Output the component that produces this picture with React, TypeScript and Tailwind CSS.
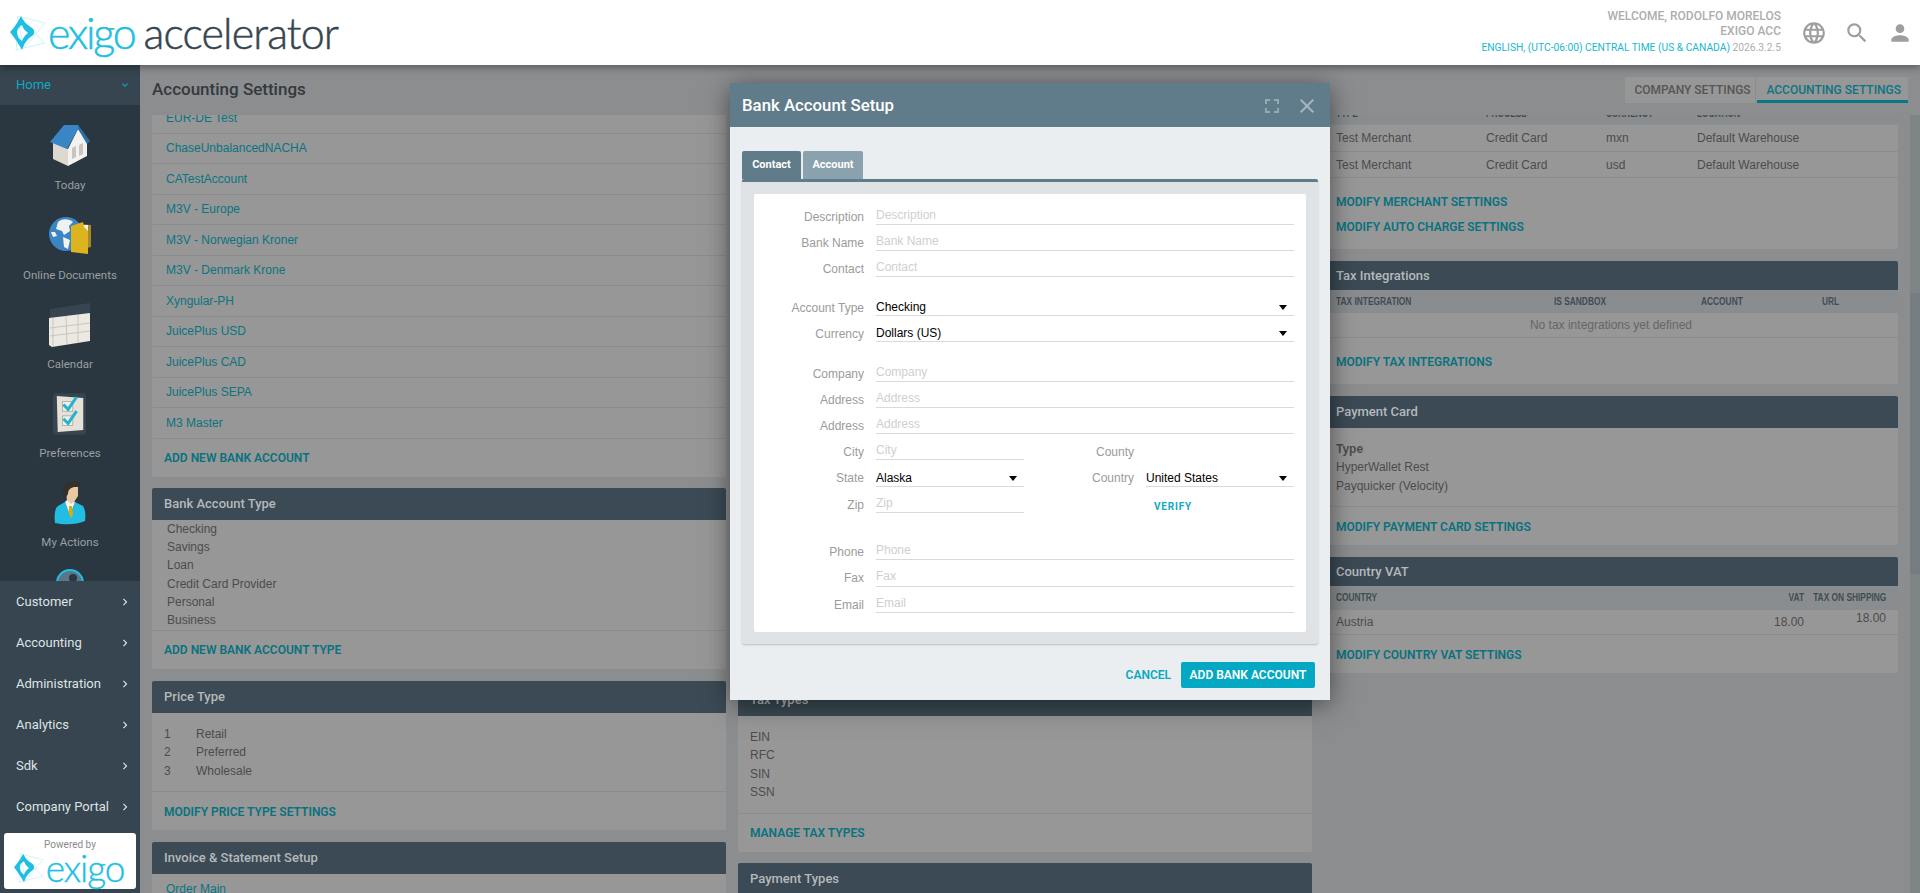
import { MdLanguage, MdSearch, MdPerson, MdClose, MdFullscreen, MdChevronRight, MdExpandMore } from "react-icons/md";

const roboto = "font-['Roboto',sans-serif]";

function Star({ className }: { className: string }) {
  return (
    <svg viewBox="0 0 36 36" className={className}>
      <g fill="none" stroke="#a0e3f3" strokeWidth="0.5">
        <path d="M7 1 L35 8 L14 33 Z" />
        <path d="M9 4 L35 28 L6 35 Z" />
      </g>
      <path
        fill="#1fbfe2"
        fillRule="evenodd"
        d="M0 17 C4 13 8 7 11 1 C13 6 17 10 22 13 C25 15 25 19 22 21 C17 24 14 29 12 35 C8 28 4 22 0 17 Z M12 10 C9 12 7 14 7 17 C7 21 9 24 12 26 C13 23 15 20 18 18 C15 16 13 13 12 10 Z"
      />
    </svg>
  );
}

function House() {
  return (
    <svg viewBox="0 0 42 44" className="w-[42px] h-[44px]">
      <path fill="#dcd9d0" d="M4 18 L19 25 L19 42 L4 35 Z" />
      <path fill="#f3f2f0" d="M19 25 L19 42 L38 32 L38 16 L29 5 Z" />
      <path fill="#c9c5ba" d="M23 24 L27 22 L27 33 L23 35 Z M30 21 L34 19 L34 30 L30 32 Z" />
      <path fill="#3a85c6" d="M1 18 L15 1 L29 1 L40 17 L29 5 L18 25 Z" />
      <path fill="#2b6fa8" d="M29 1 L41 17 L38 20 L29 5 Z" />
    </svg>
  );
}

function GlobeFolder() {
  return (
    <svg viewBox="0 0 42 38" className="w-[42px] h-[38px]">
      <circle cx="17" cy="17" r="17" fill="#3c85c5" />
      <path fill="#f0f2f2" d="M9 5 C14 1 20 2 24 5 L20 9 L21 14 L15 18 L13 14 L7 12 Z M14 20 L21 23 L19 32 L15 30 Z M2 15 L6 15 L8 19 L4 20 Z" />
      <path fill="#a8892a" d="M30 7 L42 8 L42 30 L34 32 Z" />
      <path fill="#f2efe4" d="M34 8 L39 8 L39 31 L34 33 Z" />
      <path fill="#dcb41e" d="M22 9 L34 5 L35 10 L39 14 L39 37 L22 35 Z" />
    </svg>
  );
}

function CalendarIcon() {
  return (
    <svg viewBox="0 0 42 44" className="w-[42px] h-[44px]">
      <path fill="#36454f" d="M1 6 L41 0 L41 11 L1 16 Z" />
      <path fill="#ece9e2" d="M0 15 L41 10 L41 38 L3 44 L0 42 Z" />
      <g stroke="#c9c6bc" strokeWidth="1" fill="none">
        <path d="M4 15 L4 43 M17 13 L18 41 M29 12 L29 39" />
        <path d="M1 25 L41 20 M1 33 L41 28" />
      </g>
    </svg>
  );
}

function Pref() {
  return (
    <svg viewBox="0 0 36 44" className="w-[34px] h-[44px]">
      <rect x="0" y="0" width="35" height="44" rx="4" fill="#36454f" />
      <path fill="#e6e1d6" d="M4 3 L32 5 L32 39 L5 41 Z" />
      <rect x="10" y="9" width="11" height="10" fill="#f2efe8" stroke="#8d8d86" strokeWidth="0.6" />
      <rect x="10" y="24" width="11" height="10" fill="#f2efe8" stroke="#8d8d86" strokeWidth="0.6" />
      <path fill="none" stroke="#23b3cf" strokeWidth="3.2" d="M11 12 L16 17 L25 4 M11 27 L16 32 L25 19" />
    </svg>
  );
}

function Person() {
  return (
    <svg viewBox="0 0 32 44" className="w-[32px] h-[44px]">
      <path fill="#21bde2" d="M1 42 C0 34 1 27 4 25 L11 21 L16 34 L21 21 L29 25 C31 28 32 34 31 40 C22 44 10 44 1 42 Z" />
      <path fill="#f5f5f2" d="M11 21 L16 34 L21 21 L18 19 L13 19 Z" />
      <path fill="#d9ac12" d="M15 25 L18 25 L19 33 L17 37 L15 33 Z" />
      <path fill="#e8c9a2" d="M11 6 L24 6 L24 15 L20 21 L17 23 L13 19 Z" />
      <path fill="#33302e" d="M10 15 C7 6 11 1 18 0 C22 0 27 2 28 5 L20 6 C16 7 14 9 14 13 L12 16 Z" />
    </svg>
  );
}

function Ring() {
  return (
    <svg viewBox="0 0 28 44" className="w-[28px] h-[44px]">
      <circle cx="14" cy="14" r="13" fill="#5b7686" stroke="#21bde2" strokeWidth="2" />
      <circle cx="17" cy="9" r="4" fill="#2b3740" />
    </svg>
  );
}

function Rows({ items }: { items: string[] }) {
  return (
    <>
      {items.map((t) => (
        <div key={t} className="h-[30.5px] flex items-center pl-[13px] ml-px border-b border-[#8b8c8c] text-[#0a7480]">
          {t}
        </div>
      ))}
    </>
  );
}

function Link({ children, h = "h-[25px]" }: { children: string; h?: string }) {
  return <div className={`${roboto} ${h} flex items-center font-semibold text-[12px] text-[#08727f]`}>{children}</div>;
}

function Footer({ children }: { children: string }) {
  return (
    <div className="h-[38px] flex items-center px-3 pt-px">
      <Link>{children}</Link>
    </div>
  );
}

function Head({ children, h = "h-[32px]" }: { children: string; h?: string }) {
  return (
    <div className={`${roboto} ${h} flex items-center px-3 bg-[#3b4a54] rounded-t-[2px] text-[13px] font-medium text-[#b5b9bc]`}>
      {children}
    </div>
  );
}

function Items({ items }: { items: string[] }) {
  return (
    <>
      {items.map((t) => (
        <div key={t} className="h-[18.4px] leading-[18.4px]">{t}</div>
      ))}
    </>
  );
}

const narrow = "font-bold text-[11px] text-[#414c52]";
const squeeze = "block whitespace-nowrap origin-left scale-x-[0.76]";
const squeezeRight = "block whitespace-nowrap text-right origin-right scale-x-[0.76]";

function Field({ label, ph, h = "h-[26px]", right = "" }: { label: string; ph: string; h?: string; right?: string }) {
  return (
    <div className={`flex ${h} ${right}`}>
      <label className="w-[122px] text-right pr-3 pt-[11px] leading-[14px] text-[#9b9b9b]">{label}</label>
      <input
        placeholder={ph}
        className="flex-1 min-w-0 border-b border-[#dadada] outline-none pt-[6px] leading-[14px] placeholder:text-[#cfcfcf]"
      />
    </div>
  );
}

function Select({ label, value, h = "h-[26px]", extra = "" }: { label: string; value: string; h?: string; extra?: string }) {
  return (
    <div className={`flex ${h} ${extra}`}>
      <label className="w-[122px] text-right pr-3 pt-[11px] leading-[14px] text-[#9b9b9b]">{label}</label>
      <div className="flex-1 min-w-0 border-b border-[#dadada] flex items-end justify-between pr-[7px] text-black">
        <span className="leading-[16px]">{value}</span>
        <svg viewBox="0 0 8 5" className="w-[8px] h-[5px] mb-[5px]"><path d="M0 0H8L4 5Z" fill="#000" /></svg>
      </div>
    </div>
  );
}

export default function App() {
  return (
    <div className="relative h-screen w-full overflow-hidden flex flex-col bg-[#8c8d8f] font-['Liberation_Sans',sans-serif] text-[12px] text-[#4c4c4c]">
      {/* top bar */}
      <header className="relative z-10 h-[65px] shrink-0 bg-white flex items-center shadow-[0_2px_8px_rgba(0,0,0,0.4)]">
        <Star className="ml-[10px] w-[36px] h-[36px]" />
        <span className="ml-[2px] font-['Lato',sans-serif] font-light text-[43px] leading-none tracking-[-2.2px] [-webkit-text-stroke:0.5px] text-[#1fbfe2]">exigo</span>
        <span className="ml-[9px] font-['Lato',sans-serif] font-light text-[43px] leading-none tracking-[-0.87px] [-webkit-text-stroke:0.5px] text-[#36454f]">accelerator</span>
        <div className={`${roboto} ml-auto text-right font-medium`}>
          <div className="text-[12px] leading-[15px] text-[#adadad]">WELCOME, RODOLFO MORELOS</div>
          <div className="text-[12px] leading-[15px] text-[#adadad]">EXIGO ACC</div>
          <div className="text-[10.25px] leading-[17px] font-normal text-[#adadad]">
            <span className="text-[#19b7d0]">ENGLISH, (UTC-06:00) CENTRAL TIME (US &amp; CANADA)</span> 2026.3.2.5
          </div>
        </div>
        <div className="flex items-center text-[#9e9e9e] ml-[20px] mr-[7px] gap-[17px]">
          <MdLanguage size={26} />
          <MdSearch size={26} />
          <MdPerson size={26} />
        </div>
      </header>

      <div className="flex flex-1 min-h-0">
        {/* sidebar */}
        <aside className={`${roboto} w-[140px] shrink-0 flex flex-col bg-[#2b3740]`}>
          <div className="h-[40px] shrink-0 bg-[#36454f] flex items-center justify-between pl-4 pr-[9px] text-[13px] text-[#12a9c4]">
            Home
            <MdExpandMore size={12} />
          </div>
          <div className="flex-1 min-h-0 overflow-hidden">
            {[
              { l: "Today", i: <House /> },
              { l: "Online Documents", i: <GlobeFolder /> },
              { l: "Calendar", i: <CalendarIcon /> },
              { l: "Preferences", i: <Pref /> },
              { l: "My Actions", i: <Person /> },
            ].map(({ l, i }) => (
              <div key={l} className="h-[89.25px] flex flex-col items-center justify-end pb-px">
                <div className="h-[44px] flex items-center justify-center mb-[9px]">{i}</div>
                <div className="h-[16px] leading-[16px] text-[11.5px] text-[#9a9fa2]">{l}</div>
              </div>
            ))}
            <div className="flex justify-center mt-[18px]">
              <Ring />
            </div>
          </div>
          <div className="shrink-0 bg-[#36454f] h-[312px]">
            {["Customer", "Accounting", "Administration", "Analytics", "Sdk", "Company Portal"].map((m) => (
              <div key={m} className="h-[41px] flex items-center justify-between pl-4 pr-[8px] text-[13px] text-[#dfe3e5]">
                {m}
                <MdChevronRight size={14} />
              </div>
            ))}
            <div className="mx-1 mt-[6px] h-[56px] bg-white rounded-[3px] flex flex-col items-center">
              <div className="text-[10px] leading-[12px] mt-[6px] text-[#8a8a8a]">Powered by</div>
              <div className="flex items-center -mt-[1px]">
                <Star className="w-[30px] h-[30px] -ml-[2px]" />
                <span className="ml-[2px] font-['Lato',sans-serif] font-light text-[37px] leading-[36px] tracking-[-1.1px] [-webkit-text-stroke:0.4px] text-[#1fbfe2]">exigo</span>
              </div>
            </div>
          </div>
        </aside>

        {/* main */}
        <main className="flex-1 min-w-0 flex flex-col">
          <div className="h-[50px] shrink-0 flex pl-3 pr-3">
            <h1 className={`${roboto} mt-[15px] text-[17px] leading-[18px] font-medium text-[#33393e]`}>Accounting Settings</h1>
            <div className={`${roboto} ml-auto mt-3 h-[26px] flex rounded-t-[2px] bg-[#979797] text-[12px] font-medium`}>
              <div className="w-[131px] pl-[9px] flex items-center text-[#555] border-r border-[#8c8d8f]">COMPANY SETTINGS</div>
              <div className="ml-px pl-[9px] pr-[7px] flex items-center text-[#0b7483] border-b-[3px] border-[#0a7584] pt-[3px]">ACCOUNTING SETTINGS</div>
            </div>
          </div>

          <div className="flex-1 min-h-0 flex overflow-hidden">
            <div className="flex-1 min-w-0 pl-3 pr-3 grid grid-cols-3 gap-3 content-start">
              {/* column 1 */}
              <div className="flex flex-col gap-3 -mt-[12px]">
                <section className="bg-[#979797] rounded-b-[2px] -mb-px">
                  <Rows items={["EUR-DE Test", "ChaseUnbalancedNACHA", "CATestAccount", "M3V - Europe", "M3V - Norwegian Kroner", "M3V - Denmark Krone", "Xyngular-PH", "JuicePlus USD", "JuicePlus CAD", "JuicePlus SEPA", "M3 Master"]} />
                  <Footer>ADD NEW BANK ACCOUNT</Footer>
                </section>
                <section className="bg-[#979797] rounded-[2px]">
                  <Head>Bank Account Type</Head>
                  <div className="pl-[15px] border-b border-[#8b8c8c]">
                    <Items items={["Checking", "Savings", "Loan", "Credit Card Provider", "Personal", "Business"]} />
                  </div>
                  <Footer>ADD NEW BANK ACCOUNT TYPE</Footer>
                </section>
                <section className="bg-[#979797] rounded-[2px]">
                  <Head>Price Type</Head>
                  <div className="pt-3 px-3 pb-[11px] border-b border-[#8b8c8c]">
                    {[["1", "Retail"], ["2", "Preferred"], ["3", "Wholesale"]].map(([n, t]) => (
                      <div key={n} className="h-[18.4px] leading-[18.4px] flex">
                        <span className="w-[32px]">{n}</span>
                        {t}
                      </div>
                    ))}
                  </div>
                  <Footer>MODIFY PRICE TYPE SETTINGS</Footer>
                </section>
                <section className="bg-[#979797] rounded-[2px]">
                  <Head>Invoice &amp; Statement Setup</Head>
                  <Rows items={["Order Main"]} />
                </section>
              </div>

              {/* column 2 */}
              <div className="flex flex-col gap-[11px] mt-[569px]">
                <section className="bg-[#979797] rounded-[2px]">
                  <Head>Tax Types</Head>
                  <div className="pt-3 px-3 pb-[11px] border-b border-[#8b8c8c]">
                    <Items items={["EIN", "RFC", "SIN", "SSN"]} />
                  </div>
                  <Footer>MANAGE TAX TYPES</Footer>
                </section>
                <section className="bg-[#979797] rounded-[2px]">
                  <Head>Payment Types</Head>
                </section>
              </div>

              {/* column 3 */}
              <div className="flex flex-col gap-3 -mt-[13px]">
                <section className="bg-[#979797] rounded-b-[2px]">
                  <div className={`${narrow} h-[23px] bg-[#8a8d8f] grid grid-cols-[150px_120px_91px_1fr] px-3 items-center border-b-2 border-[#8b8f91] pt-px`}>
                    <span className={squeeze}>TYPE</span><span className={squeeze}>PROCESS</span><span className={squeeze}>CURRENCY</span><span className={squeeze}>LOCATION</span>
                  </div>
                  {["mxn", "usd"].map((c, i) => (
                    <div key={c} className={`${i === 0 ? "h-[27px]" : "h-[26px]"} grid grid-cols-[150px_120px_91px_1fr] px-3 items-center border-b border-[#8b8c8c]`}>
                      <span>Test Merchant</span><span>Credit Card</span><span>{c}</span><span>Default Warehouse</span>
                    </div>
                  ))}
                  <div className="px-3 pt-[11px] pb-[10px]">
                    <Link>MODIFY MERCHANT SETTINGS</Link>
                    <Link>MODIFY AUTO CHARGE SETTINGS</Link>
                  </div>
                </section>
                <section className="bg-[#979797] rounded-[2px]">
                  <Head h="h-[29px]">Tax Integrations</Head>
                  <div className={`${narrow} h-[23px] bg-[#8a8d8f] grid grid-cols-[218px_147px_121px_1fr] px-3 items-center`}>
                    <span className={squeeze}>TAX INTEGRATION</span><span className={squeeze}>IS SANDBOX</span><span className={squeeze}>ACCOUNT</span><span className={squeeze}>URL</span>
                  </div>
                  <div className="h-[25px] flex items-center justify-center border-b border-[#8b8c8c] text-[#666]">No tax integrations yet defined</div>
                  <div className="h-[46px] flex items-center px-3 pt-[2px]"><Link>MODIFY TAX INTEGRATIONS</Link></div>
                </section>
                <section className="bg-[#979797] rounded-[2px]">
                  <Head>Payment Card</Head>
                  <div className="pt-3 px-3 pb-[11px] border-b border-[#8b8c8c]">
                    <div className="h-[18.4px] leading-[18.4px] font-bold">Type</div>
                    <Items items={["HyperWallet Rest", "Payquicker (Velocity)"]} />
                  </div>
                  <Footer>MODIFY PAYMENT CARD SETTINGS</Footer>
                </section>
                <section className="bg-[#979797] rounded-[2px]">
                  <Head h="h-[29px]">Country VAT</Head>
                  <div className={`${narrow} h-[24px] bg-[#8a8d8f] flex pl-3 pr-3 pb-[2px] items-center`}>
                    <span className={`flex-1 ${squeeze}`}>COUNTRY</span>
                    <span className="w-[40px]"><span className={squeezeRight}>VAT</span></span>
                    <span className="w-[82px] flex justify-end"><span className={squeezeRight}>TAX ON SHIPPING</span></span>
                  </div>
                  <div className="h-[25px] flex pl-3 pr-3 items-center border-b border-[#8b8c8c]">
                    <span className="flex-1">Austria</span>
                    <span className="w-[40px] text-right">18.00</span>
                    <span className="w-[82px] text-right -mt-2">18.00</span>
                  </div>
                  <Footer>MODIFY COUNTRY VAT SETTINGS</Footer>
                </section>
              </div>
            </div>

            {/* page scrollbar */}
            <div className="w-[10px] shrink-0 bg-[#7f8487]">
              <div className="mt-[178px] h-[281px] bg-[#767d80]" />
            </div>
          </div>
        </main>
      </div>

      {/* modal */}
      <div className="absolute left-[730px] top-[83px] w-[600px] h-[617px] bg-[#eaeef1] flex flex-col shadow-[0_4px_24px_rgba(0,0,0,0.5)]">
        <div className={`${roboto} h-[44px] shrink-0 bg-[#607c8b] flex items-center pl-3 pr-[11px] pt-px text-[16.8px] font-medium text-white`}>
          Bank Account Setup
          <MdFullscreen size={24} className="ml-auto text-[#93a9b4]" />
          <MdClose size={24} className="ml-[11px] text-[#a3b6bf]" />
        </div>
        <div className="flex-1 px-3 pt-[24px]">
          <div className={`${roboto} flex h-[28px] gap-[2px] text-[11px] font-bold text-white`}>
            <div className="w-[59px] bg-[#607c8b] rounded-t-[2px] flex items-center justify-center">Contact</div>
            <div className="w-[60px] bg-[#8aa1ae] rounded-t-[2px] flex items-center justify-center">Account</div>
          </div>
          <div className="h-[465px] border-t-[3px] border-[#607c8b] bg-[#dfe3e6] px-3 pt-3 rounded-[2px] shadow-[0_1px_2px_rgba(0,0,0,0.2)]">
            <div className="h-[438px] bg-white rounded-[2px] pt-[5px] pr-3">
              <Field label="Description" ph="Description" />
              <Field label="Bank Name" ph="Bank Name" />
              <Field label="Contact" ph="Contact" />
              <Select label="Account Type" value="Checking" extra="mt-[13px]" />
              <Select label="Currency" value="Dollars (US)" />
              <Field label="Company" ph="Company" right="mt-[14px]" />
              <Field label="Address" ph="Address" />
              <Field label="Address" ph="Address" />
              <div className="grid grid-cols-[270px_1fr]">
                <div>
                  <Field label="City" ph="City" />
                  <Select label="State" value="Alaska" h="h-[27px]" />
                  <Field label="Zip" ph="Zip" />
                </div>
                <div>
                  <div className="h-[26px] w-[122px] text-right pr-3 pt-[11px] leading-[14px] text-[#9b9b9b]">County</div>
                  <Select label="Country" value="United States" h="h-[27px]" />
                  <div className={`${roboto} ml-[130px] pt-[14px] text-[10px] leading-[12px] font-bold tracking-[0.8px] text-[#10a9c0]`}>VERIFY</div>
                </div>
              </div>
              <Field label="Phone" ph="Phone" right="mt-[21px]" />
              <Field label="Fax" ph="Fax" h="h-[27px]" />
              <Field label="Email" ph="Email" />
            </div>
          </div>
        </div>
        <div className={`${roboto} shrink-0 flex items-start justify-end h-[56px] pr-[15px] pt-[18px] text-[12px] font-semibold`}>
          <span className="text-[#0ba9c0] mr-[10px] leading-[26px]">CANCEL</span>
          <span className="w-[134px] h-[26px] rounded-[2px] bg-[#04a8c2] text-white flex items-center justify-center">ADD BANK ACCOUNT</span>
        </div>
      </div>
    </div>
  );
}
